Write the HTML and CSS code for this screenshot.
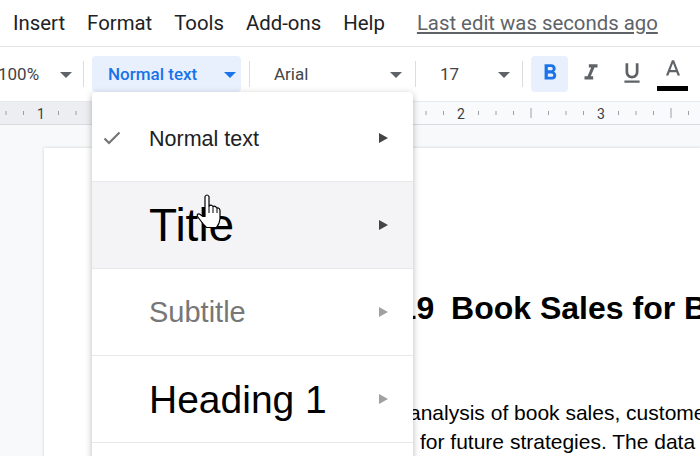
FILE: index.html
```html
<!DOCTYPE html>
<html lang="en">
<head>
    <meta charset="UTF-8">
    <title>Book Sales Report - Docs</title>
    <link rel="stylesheet" href="styles.css">
</head>
<body>
    <div class="menubar">
        <span class="menu-item">Insert</span>
        <span class="menu-item">Format</span>
        <span class="menu-item">Tools</span>
        <span class="menu-item">Add-ons</span>
        <span class="menu-item">Help</span>
        <a class="last-edit" href="#">Last edit was seconds ago</a>
    </div>

    <div class="toolbar">
        <div class="tb-select zoom">100%<span class="caret"></span></div>
        <div class="tb-divider"></div>
        <div class="tb-select styles active">Normal text<span class="caret"></span></div>
        <div class="tb-divider"></div>
        <div class="tb-select font">Arial<span class="caret"></span></div>
        <div class="tb-divider"></div>
        <div class="tb-select size">17<span class="caret"></span></div>
        <div class="tb-divider"></div>
        <div class="tb-btn active">
            <svg width="26" height="26" viewBox="0 0 24 24"><path fill="#1a73e8" d="M15.6 10.79c.97-.67 1.65-1.77 1.65-2.79 0-2.26-1.75-4-4-4H7v14h7.04c2.09 0 3.71-1.7 3.71-3.79 0-1.52-.86-2.82-2.15-3.42zM10 6.5h3c.83 0 1.5.67 1.5 1.5s-.67 1.5-1.5 1.5h-3v-3zm3.5 9H10v-3h3.5c.83 0 1.5.67 1.5 1.5s-.67 1.5-1.5 1.5z"/></svg>
        </div>
        <div class="tb-btn">
            <svg width="26" height="26" viewBox="0 0 24 24"><path fill="#5f6368" d="M10 4v3h2.21l-3.42 8H6v3h8v-3h-2.21l3.42-8H18V4z"/></svg>
        </div>
        <div class="tb-btn">
            <svg width="26" height="26" viewBox="0 0 24 24"><path fill="#5f6368" d="M12 17c3.31 0 6-2.69 6-6V3h-2.5v8c0 1.93-1.57 3.5-3.5 3.5S8.5 12.930 8.5 11V3H6v8c0 3.31 2.69 6 6 6zm-7 2v2h14v-2H5z"/></svg>
        </div>
        <div class="tb-btn text-color">
            <svg width="26" height="26" viewBox="0 0 24 24"><path fill="#5f6368" d="M11 3L5.5 17h2.25l1.12-3h6.25l1.12 3h2.25L13 3h-2zm-1.38 9L12 5.67 14.38 12H9.62z"/></svg>
            <span class="color-bar"></span>
        </div>
    </div>

    <div class="ruler">
        <svg width="700" height="22" viewBox="0 0 700 22">
            <defs>
                <pattern id="ticks" x="181" y="0" width="140" height="22" patternUnits="userSpaceOnUse">
                    <g stroke="#9aa0a6" stroke-width="1">
                        <line x1="17.5" y1="9" x2="17.5" y2="13"/>
                        <line x1="35" y1="9" x2="35" y2="13"/>
                        <line x1="52.5" y1="9" x2="52.5" y2="13"/>
                        <line x1="70" y1="6" x2="70" y2="16"/>
                        <line x1="87.5" y1="9" x2="87.5" y2="13"/>
                        <line x1="105" y1="9" x2="105" y2="13"/>
                        <line x1="122.5" y1="9" x2="122.5" y2="13"/>
                    </g>
                </pattern>
            </defs>
            <rect width="700" height="22" fill="url(#ticks)"/>
            <g class="ruler-num">
                <text x="41" y="16.5">1</text>
                <text x="321" y="16.5">1</text>
                <text x="461" y="16.5">2</text>
                <text x="601" y="16.5">3</text>
            </g>
        </svg>
    </div>

    <div class="canvas">
        <div class="page">
            <h1 class="doc-title"><span class="year">2019</span> Book Sales for Bookworm</h1>
            <div class="doc-line first">analysis of book sales, customer trends and</div>
            <div class="doc-line second">for future strategies. The data covers</div>
        </div>
    </div>

    <div class="style-menu">
        <div class="style-item">
            <span class="check">
                <svg width="18" height="14" viewBox="0 0 18 14"><path d="M1.5 7.5l4.5 4.5L16.5 1.5" fill="none" stroke="#757575" stroke-width="2.2"/></svg>
            </span>
            <span class="style-label normal">Normal text</span>
            <span class="arrow"></span>
        </div>
        <div class="style-item hover">
            <span class="check"></span>
            <span class="style-label title">Title</span>
            <span class="arrow"></span>
        </div>
        <div class="style-item">
            <span class="check"></span>
            <span class="style-label subtitle">Subtitle</span>
            <span class="arrow light"></span>
        </div>
        <div class="style-item">
            <span class="check"></span>
            <span class="style-label heading1">Heading 1</span>
            <span class="arrow light"></span>
        </div>
    </div>

    <!-- mouse pointer over the Title row -->
    <svg class="cursor" width="26" height="36" viewBox="0 0 26 36">
        <path d="M9 3.5Q11 0.5 13 3.5L13 13Q15 11 17 13.5Q19 12.5 21 15Q23.5 14.5 24 17.5L24 26Q23.5 31 20.5 34.5L10.5 34.5Q7.5 31.5 4.5 27.5L1.5 23.5Q0.5 20.5 3.5 21L7 23.5L9 23.5Z" fill="#fff" stroke="#000" stroke-width="1.2" stroke-linejoin="round"/>
        <path d="M13 13L13 20M17 13.5L17 20M21 15L21 20" stroke="#000" stroke-width="1"/>
    </svg>
</body>
</html>
```

FILE: styles.css
```css
body {
    margin: 0;
    width: 700px;
    height: 456px;
    overflow: hidden;
    position: relative;
    font-family: Roboto, "Liberation Sans", sans-serif;
    background-color: #f8f9fa;
}
.menubar {
    height: 46px;
    display: flex;
    align-items: center;
    gap: 22px;
    padding-left: 13px;
    background-color: white;
    border-bottom: 1px solid #e3e3e3;
    font-size: 20.35px;
    color: #202124;
}
.last-edit {
    margin-left: 10px;
    color: #5f6368;
    text-decoration: underline;
}
.toolbar {
    height: 54px;
    display: flex;
    align-items: center;
    background-color: white;
    font-size: 17px;
    color: #444;
}
.tb-select {
    position: relative;
    height: 36px;
    display: flex;
    align-items: center;
    border-radius: 4px;
    box-sizing: border-box;
}
.caret {
    position: absolute;
    top: 16px;
    width: 0;
    height: 0;
    border-left: 6px solid transparent;
    border-right: 6px solid transparent;
    border-top: 6px solid #5f6368;
}
.zoom {
    width: 77px;
    margin-left: -2px;
}
.zoom .caret { left: 62px; }
.styles {
    width: 149px;
    padding-left: 16px;
}
.styles .caret {
    left: 132px;
    border-top-color: #1a73e8;
}
.font {
    width: 149px;
    padding-left: 16px;
}
.font .caret { left: 132px; }
.size {
    width: 90px;
    padding-left: 16px;
}
.size .caret { left: 74px; }
.active {
    background-color: #e8f0fe;
    color: #1a73e8;
    font-weight: 500;
}
.tb-divider {
    width: 1px;
    height: 26px;
    background-color: #dadce0;
    margin: 0 8px;
}
.tb-btn {
    position: relative;
    width: 37px;
    height: 36px;
    margin-right: 4px;
    display: flex;
    align-items: center;
    justify-content: center;
    border-radius: 4px;
}
.tb-btn svg {
    margin-top: -2px;
}
.text-color svg {
    margin-top: -8px;
}
.color-bar {
    position: absolute;
    left: 3px;
    right: 3px;
    bottom: 1px;
    height: 5px;
    background-color: #000;
}
.ruler {
    height: 22px;
    border-top: 1px solid #e8eaed;
    border-bottom: 1px solid #dadce0;
    background: linear-gradient(to right, #eceef1 181px, #f9fafb 181px);
}
.ruler svg {
    display: block;
}
.ruler-num text {
    font-family: Roboto, sans-serif;
    font-size: 14px;
    fill: #3c4043;
    text-anchor: middle;
}
.canvas {
    padding: 23px 0 0 44px;
}
.page {
    background-color: white;
    height: 400px;
    padding: 140px 0 0 137px;
    box-shadow: 0 0 3px rgba(0, 0, 0, 0.18);
    font-family: "Liberation Sans", Arial, sans-serif;
    color: #000;
    white-space: nowrap;
}
.doc-title {
    margin: 0 0 70px 0;
    padding-left: 182px;
    font-size: 32px;
    line-height: 40px;
    font-weight: bold;
}
.year {
    margin-right: 8px;
}
.doc-line {
    font-size: 21px;
    line-height: 29px;
}
.doc-line.first { padding-left: 228px; }
.doc-line.second { padding-left: 239px; }
.style-menu {
    position: absolute;
    left: 92px;
    top: 92px;
    width: 321px;
    height: 400px;
    padding-top: 3px;
    background-color: white;
    box-shadow: 0 2px 7px rgba(0, 0, 0, 0.28);
    border-radius: 4px;
    font-family: "Liberation Sans", Arial, sans-serif;
}
.style-item {
    height: 86px;
    display: flex;
    align-items: center;
    border-bottom: 1px solid #e8e8ea;
}
.style-item.hover {
    background-color: #f4f4f6;
}
.check {
    width: 57px;
    padding-left: 11px;
    box-sizing: border-box;
    display: flex;
}
.style-label {
    flex: 1;
    color: #202124;
    line-height: 1;
}
.normal { font-size: 21.5px; padding-top: 3px; }
.title { font-size: 46px; color: #000; }
.subtitle { font-size: 29px; color: #777; }
.heading1 { font-size: 39px; color: #000; }
.arrow {
    width: 0;
    height: 0;
    margin-right: 25px;
    border-top: 5px solid transparent;
    border-bottom: 5px solid transparent;
    border-left: 9px solid #444;
}
.arrow.light {
    border-left-color: #a0a0a0;
}
.cursor {
    position: absolute;
    left: 196px;
    top: 193px;
}
```
